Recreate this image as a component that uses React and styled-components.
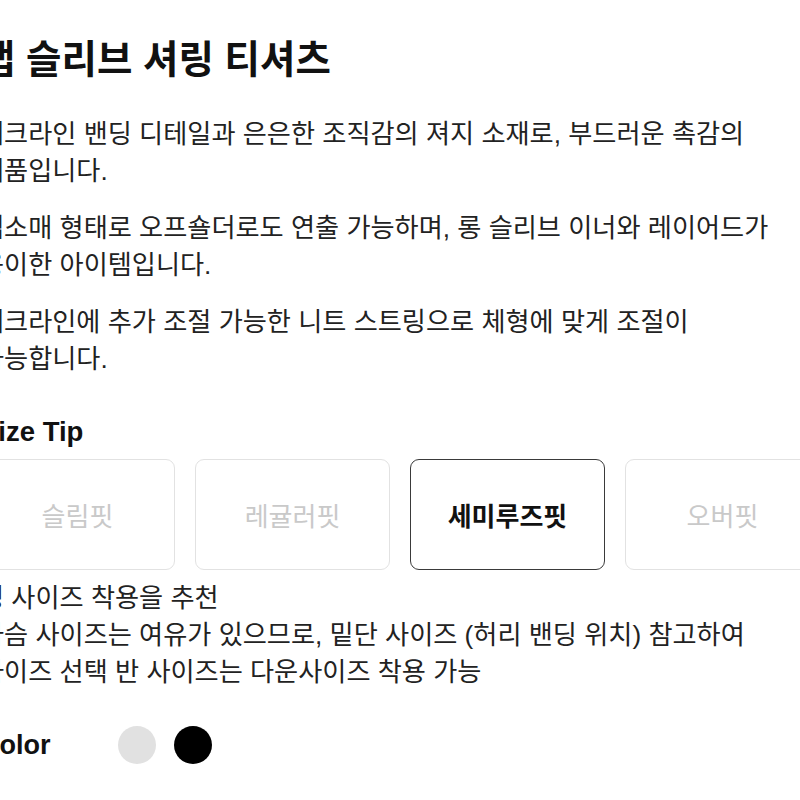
import React from "react";
import styled, { createGlobalStyle } from "styled-components";

const GlobalStyle = createGlobalStyle`
  html, body {
    margin: 0;
    padding: 0;
    background: #ffffff;
    overflow: hidden;
  }
  body {
    font-family: "Liberation Sans", "Noto Sans CJK KR", sans-serif;
    color: #1b1b1b;
  }
`;

const Page = styled.main`
  width: 840px;
  margin-left: -20px;
  padding-top: 38px;
`;

const Title = styled.h1`
  margin: 0 0 34px;
  font-size: 38.5px;
  line-height: 44px;
  font-weight: 700;
  color: #111;
`;

const Paragraph = styled.p`
  margin: 0 0 20px;
  font-size: 26.2px;
  line-height: 37px;
  font-weight: 400;
  color: #222;
  &:last-of-type {
    margin-bottom: 0;
  }
`;

const SectionTitle = styled.h2`
  margin: 38px 0 11px;
  font-size: 27.5px;
  line-height: 32px;
  font-weight: 700;
  color: #111;
`;

const FitGrid = styled.div`
  display: grid;
  grid-template-columns: repeat(4, 1fr);
  gap: 20px;
`;

const FitBox = styled.div`
  height: 111px;
  box-sizing: border-box;
  display: flex;
  align-items: center;
  justify-content: center;
  border-radius: 9px;
  border: ${(p) => (p.$active ? "1.5px solid #3a3a3a" : "1px solid #e2e2e2")};
  font-size: 26px;
  font-weight: ${(p) => (p.$active ? 700 : 400)};
  color: ${(p) => (p.$active ? "#111" : "#c9c9c9")};
`;

const Notes = styled.div`
  margin-top: 10px;
  font-size: 26.2px;
  line-height: 37px;
  color: #222;
`;

const ColorRow = styled.div`
  display: flex;
  align-items: center;
  margin-top: 35px;
`;

const ColorLabel = styled.span`
  width: 138px;
  font-size: 27px;
  font-weight: 700;
  color: #111;
`;

const Swatches = styled.div`
  display: flex;
  gap: 18px;
`;

const Swatch = styled.span`
  width: 38px;
  height: 38px;
  border-radius: 50%;
  background: ${(p) => p.$color};
`;

const fits = [
  { label: "슬림핏" },
  { label: "레귤러핏" },
  { label: "세미루즈핏", active: true },
  { label: "오버핏" },
];

export default function App() {
  return (
    <>
      <GlobalStyle />
      <Page>
        <Title>캡 슬리브 셔링 티셔츠</Title>
        <Paragraph>
          네크라인 밴딩 디테일과 은은한 조직감의 져지 소재로, 부드러운 촉감의
          <br />
          제품입니다.
        </Paragraph>
        <Paragraph>
          캡소매 형태로 오프숄더로도 연출 가능하며, 롱 슬리브 이너와 레이어드가
          <br />
          용이한 아이템입니다.
        </Paragraph>
        <Paragraph>
          네크라인에 추가 조절 가능한 니트 스트링으로 체형에 맞게 조절이
          <br />
          가능합니다.
        </Paragraph>

        <SectionTitle>Size Tip</SectionTitle>
        <FitGrid>
          {fits.map((f) => (
            <FitBox key={f.label} $active={f.active}>
              {f.label}
            </FitBox>
          ))}
        </FitGrid>
        <Notes>
          정 사이즈 착용을 추천
          <br />
          가슴 사이즈는 여유가 있으므로, 밑단 사이즈 (허리 밴딩 위치) 참고하여
          <br />
          사이즈 선택 반 사이즈는 다운사이즈 착용 가능
        </Notes>

        <ColorRow>
          <ColorLabel>Color</ColorLabel>
          <Swatches>
            <Swatch $color="#e1e1e1" />
            <Swatch $color="#000000" />
          </Swatches>
        </ColorRow>
      </Page>
    </>
  );
}
